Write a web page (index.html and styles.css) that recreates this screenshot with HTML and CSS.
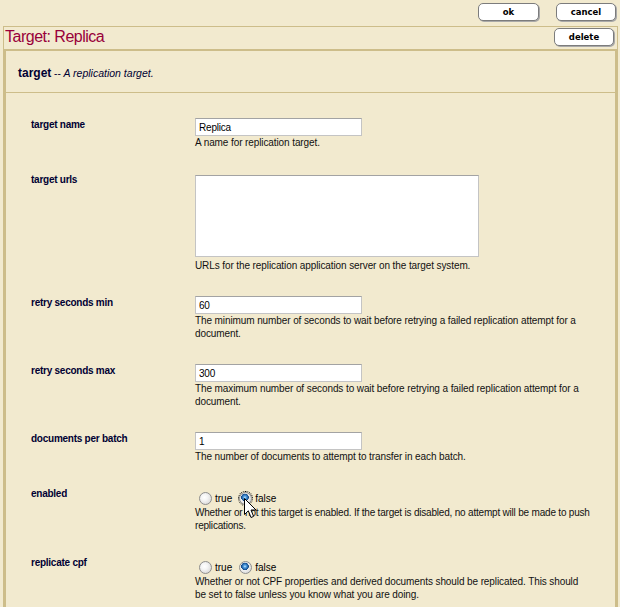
FILE: index.html
```html
<!DOCTYPE html>
<html>
<head>
<meta charset="utf-8">
<title>Target: Replica</title>
<link rel="stylesheet" href="styles.css">
</head>
<body>
<div class="topbar">
  <button class="btn btn-ok">ok</button>
  <button class="btn btn-cancel">cancel</button>
</div>
<div class="panel">
  <div class="title-row">
    <h1 class="title">Target: Replica</h1>
    <button class="btn btn-delete">delete</button>
  </div>
  <div class="inner">
    <div class="section-head"><b class="sec-name">target</b> -- <i class="sec-desc">A replication target.</i></div>
    <div class="fields">
      <div class="field">
        <div class="label">target name</div>
        <div class="control">
          <input class="text" type="text" value="Replica">
          <div class="desc">A name for replication target.</div>
        </div>
      </div>
      <div class="field">
        <div class="label">target urls</div>
        <div class="control">
          <textarea class="area"></textarea>
          <div class="desc">URLs for the replication application server on the target system.</div>
        </div>
      </div>
      <div class="field">
        <div class="label">retry seconds min</div>
        <div class="control">
          <input class="text" type="text" value="60">
          <div class="desc">The minimum number of seconds to wait before retrying a failed replication attempt for a document.</div>
        </div>
      </div>
      <div class="field">
        <div class="label">retry seconds max</div>
        <div class="control">
          <input class="text" type="text" value="300">
          <div class="desc">The maximum number of seconds to wait before retrying a failed replication attempt for a document.</div>
        </div>
      </div>
      <div class="field">
        <div class="label">documents per batch</div>
        <div class="control">
          <input class="text" type="text" value="1">
          <div class="desc">The number of documents to attempt to transfer in each batch.</div>
        </div>
      </div>
      <div class="field">
        <div class="label">enabled</div>
        <div class="control">
          <div class="radios">
            <label class="opt"><input class="radio" type="radio" name="enabled"><span>true</span></label>
            <label class="opt"><input class="radio focused" type="radio" name="enabled" checked><span>false</span>
              <svg class="cursor" width="13" height="21" viewBox="0 0 13 21"><path d="M0.5 0.5 L0.5 16.5 L4.3 12.8 L7 19.5 L9.6 18.4 L7 12 L12 12 Z" fill="#fff" stroke="#000" stroke-width="1" stroke-linejoin="miter"/></svg>
            </label>
          </div>
          <div class="desc desc-tight">Whether or not this target is enabled. If the target is disabled, no attempt will be made to push replications.</div>
        </div>
      </div>
      <div class="field">
        <div class="label">replicate cpf</div>
        <div class="control">
          <div class="radios">
            <label class="opt"><input class="radio" type="radio" name="cpf"><span>true</span></label>
            <label class="opt"><input class="radio" type="radio" name="cpf" checked><span>false</span></label>
          </div>
          <div class="desc">Whether or not CPF properties and derived documents should be replicated. This should be set to false unless you know what you are doing.</div>
        </div>
      </div>
    </div>
  </div>
</div>
</body>
</html>
```
FILE: styles.css
```css
html, body {
  margin: 0;
  padding: 0;
}
body {
  background: #F2EACF;
  font-family: "Liberation Sans", Arial, sans-serif;
  font-size: 10px;
  color: #000;
}

.topbar {
  display: flex;
  justify-content: flex-end;
  gap: 17px;
  padding: 3px 4px 0 0;
  height: 26px;
  box-sizing: border-box;
}

.btn {
  display: block;
  height: 18px;
  padding: 0;
  background: #fff;
  border: 1px solid #7c7c7c;
  border-radius: 5px;
  box-shadow: 1px 1px 0 #a9a9a9;
  font-family: "DejaVu Sans", Verdana, sans-serif;
  font-weight: bold;
  font-size: 8.5px;
  color: #000;
  line-height: 16px;
  text-align: center;
}
.btn-ok { width: 61px; }
.btn-cancel { width: 60px; }
.btn-delete { width: 60px; margin-top: 1px; }

.panel {
  margin: 0 2px 0 3px;
  border: 1px solid #CDBD8A;
  border-bottom: none;
}

.title-row {
  display: flex;
  justify-content: space-between;
  align-items: flex-start;
  height: 22px;
  padding: 0 3px 0 1px;
}
.title {
  margin: 0;
  font-family: "Liberation Sans", Arial, sans-serif;
  font-weight: normal;
  font-size: 16px;
  letter-spacing: -0.5px;
  line-height: 19px;
  color: #99003A;
}

.inner {
  border: 2px solid #CDBD8A;
  border-bottom: none;
  padding-bottom: 40px;
}

.section-head {
  padding: 15px 0 11px 12px;
  line-height: 14px;
  border-bottom: 1px solid #CDBD8A;
  color: #000033;
  font-size: 10px;
}
.sec-name {
  font-size: 12px;
  font-weight: bold;
}
.sec-desc {
  font-style: italic;
  font-size: 10.5px;
}

.fields {
  padding: 25px 0 0 25px;
}
.field {
  display: grid;
  grid-template-columns: 164px 396px;
  margin-bottom: 24px;
}
.label {
  font-weight: bold;
  line-height: 13px;
  letter-spacing: -0.25px;
  color: #000033;
}
.control {
  line-height: 13px;
}
.text {
  display: block;
  box-sizing: border-box;
  width: 167px;
  height: 18px;
  margin: 0;
  padding: 0 3px;
  background: #fff;
  border: 1px solid #c4c4c4;
  border-top-color: #a3a3a3;
  font-family: "Liberation Sans", Arial, sans-serif;
  font-size: 10px;
  letter-spacing: -0.2px;
  color: #000;
  outline: none;
}
.area {
  display: block;
  box-sizing: border-box;
  width: 284px;
  height: 82px;
  margin: 2px 0;
  padding: 2px;
  background: #fff;
  border: 1px solid #c4c4c4;
  border-top-color: #a3a3a3;
  resize: none;
  outline: none;
}
.desc {
  color: #111;
  letter-spacing: -0.1px;
}
.desc-tight {
  letter-spacing: -0.2px;
}

.radios {
  display: flex;
  align-items: center;
  height: 13px;
  padding: 5px 0 1px;
}
.opt {
  position: relative;
  display: flex;
  align-items: center;
  margin-right: 3px;
}
.radio {
  appearance: none;
  -webkit-appearance: none;
  box-sizing: border-box;
  width: 13px;
  height: 13px;
  margin: 0 3px 0 4px;
  border-radius: 50%;
  border: 1px solid #8e8e8e;
  background: radial-gradient(circle at 40% 40%, #ffffff 0, #f4f4f4 35%, #d6d6d6 85%, #c2c2c2 100%);
}
.radio:checked {
  background:
    radial-gradient(circle at 45% 40%, #cfe8ff 0, #5aa6e6 1.2px, #1d5fa6 3px, #12447f 3.6px, rgba(0,0,0,0) 4px),
    radial-gradient(circle at 40% 40%, #ffffff 0, #f4f4f4 35%, #d6d6d6 85%, #c2c2c2 100%);
}
.focused {
  outline: 1px dotted #000;
  outline-offset: 0;
}
.cursor {
  position: absolute;
  left: 9px;
  top: 6px;
  z-index: 2;
}
```
